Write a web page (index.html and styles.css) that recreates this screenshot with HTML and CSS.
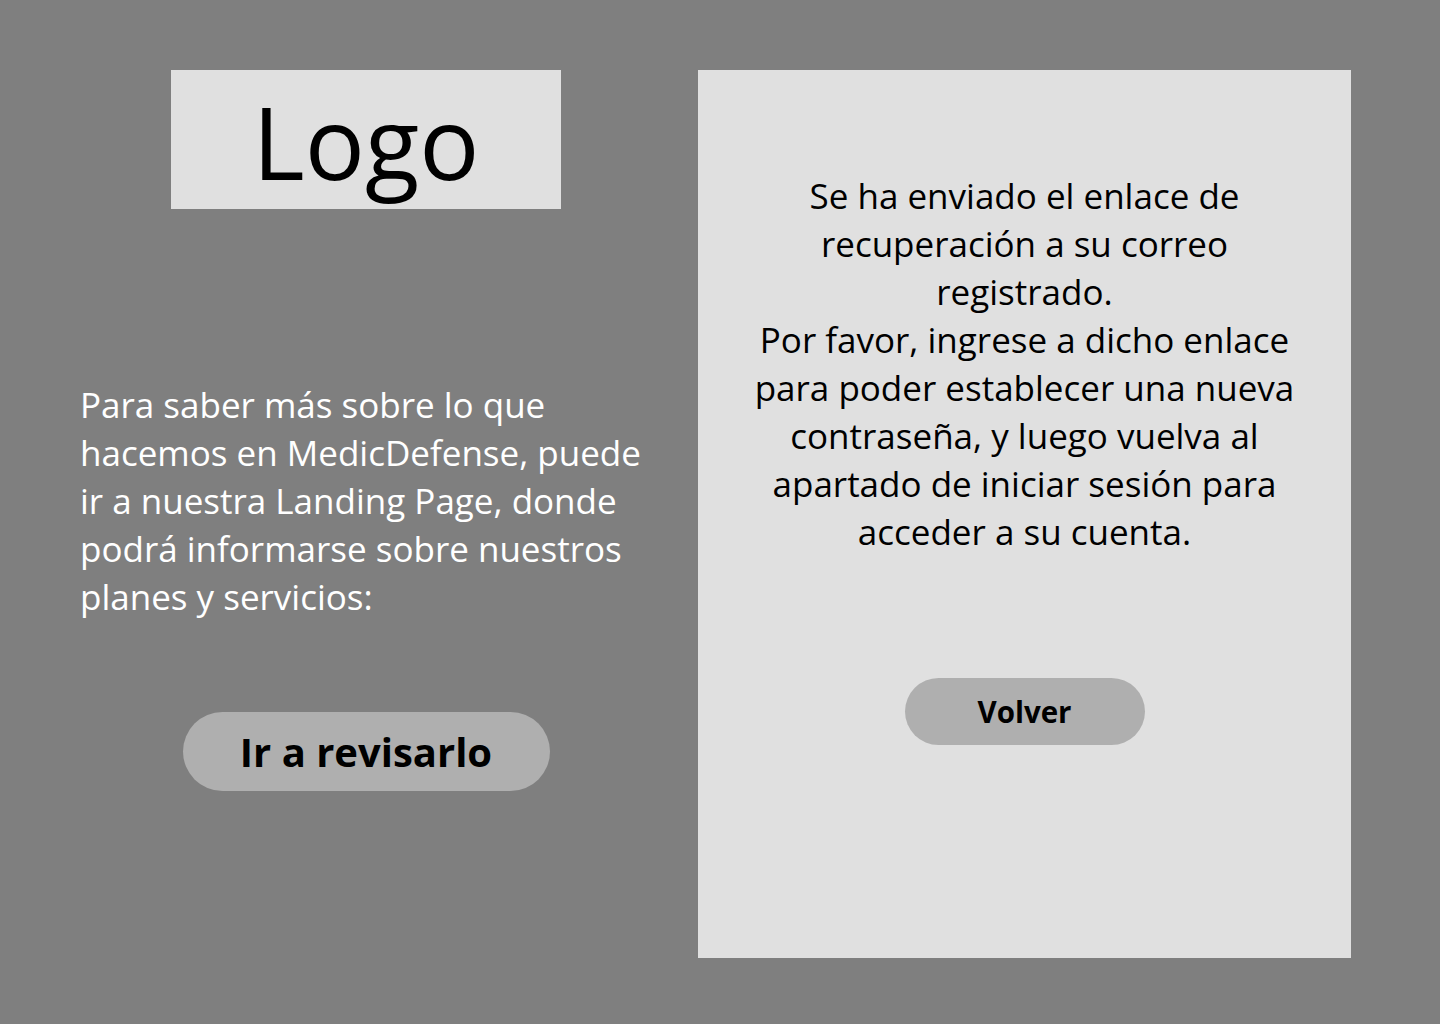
FILE: index.html
```html
<!DOCTYPE html>
<html lang="es">
<head>
<meta charset="utf-8">
<title>MedicDefense - Recuperación</title>
<link rel="stylesheet" href="styles.css">
</head>
<body>
<main class="page">
  <section class="left">
    <div class="logo">Logo</div>
    <p class="info">Para saber más sobre lo que hacemos en MedicDefense, puede ir a nuestra Landing Page, donde podrá informarse sobre nuestros planes y servicios:</p>
    <button class="btn btn-large">Ir a revisarlo</button>
  </section>
  <section class="panel">
    <p class="message">Se ha enviado el enlace de recuperación a su correo registrado.<br>Por favor, ingrese a dicho enlace para poder establecer una nueva contraseña, y luego vuelva al apartado de iniciar sesión para acceder a su cuenta.</p>
    <button class="btn btn-small">Volver</button>
  </section>
</main>
</body>
</html>
```
FILE: styles.css
```css
html, body {
  margin: 0;
  padding: 0;
}
body {
  background: #7f7f7f;
  font-family: "Open Sans", "Noto Sans", sans-serif;
  width: 1440px;
  height: 1024px;
  overflow: hidden;
}
.page {
  display: flex;
  align-items: flex-start;
  padding: 70px 0 0 80px;
  gap: 46px;
}
.left {
  width: 572px;
  display: flex;
  flex-direction: column;
  align-items: center;
}
.logo {
  width: 390px;
  height: 139px;
  background: #e0e0e0;
  color: #000;
  font-size: 100px;
  text-align: center;
  box-sizing: border-box;
  padding-top: 4px;
  line-height: 135px;
}
.info {
  align-self: stretch;
  margin: 172px 0 0 0;
  color: #fff;
  font-size: 35px;
  line-height: 48px;
}
.btn {
  border: none;
  background: #afafaf;
  color: #000;
  font-family: "Open Sans", "Noto Sans", sans-serif;
  font-weight: 700;
  border-radius: 999px;
  padding: 0;
  cursor: pointer;
}
.btn-large {
  margin-top: 91px;
  width: 367px;
  height: 79px;
  font-size: 40px;
}
.panel {
  width: 653px;
  height: 888px;
  background: #e0e0e0;
  display: flex;
  flex-direction: column;
  align-items: center;
  box-sizing: border-box;
  padding-top: 102px;
}
.message {
  width: 565px;
  margin: 0;
  text-align: center;
  color: #000;
  font-size: 35px;
  line-height: 48px;
}
.btn-small {
  margin-top: 122px;
  width: 240px;
  height: 67px;
  font-size: 29.5px;
}
```
